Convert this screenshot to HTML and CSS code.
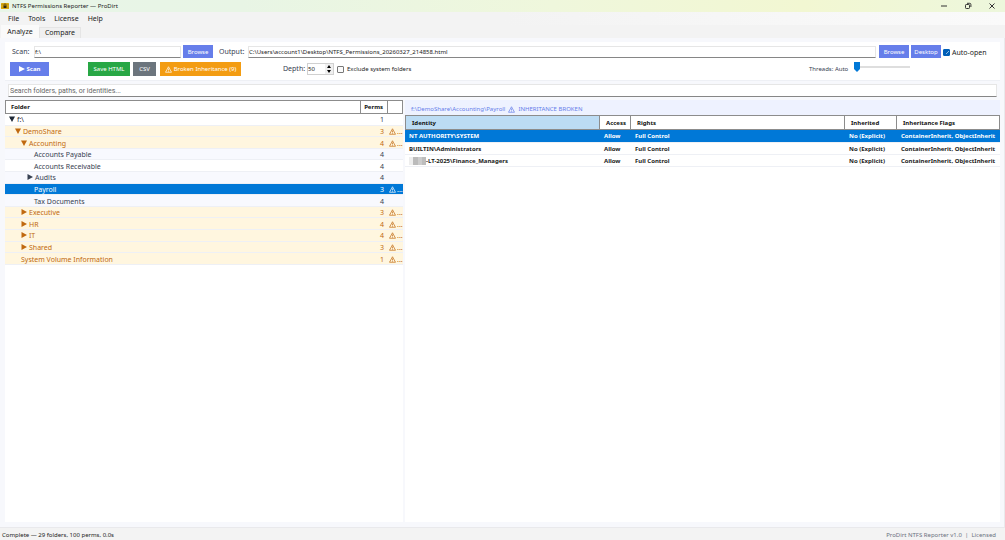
FILE: index.html
```html
<!DOCTYPE html>
<html lang="en">
<head>
<meta charset="utf-8">
<title>NTFS Permissions Reporter — ProDirt</title>
<link rel="stylesheet" href="styles.css">
</head>
<body>
<svg class="defs" aria-hidden="true">
  <symbol id="warn" viewBox="0 0 14 14"><path d="M7 1.5 13 12.5H1Z" fill="none" stroke="currentColor" stroke-width="1.4" stroke-linejoin="round"/><path d="M7 5v4M7 10v1.3" stroke="currentColor" stroke-width="1.4"/></symbol>
  <symbol id="down" viewBox="0 0 6 6"><path d="M0 .5H6L3 6Z" fill="currentColor"/></symbol>
  <symbol id="right" viewBox="0 0 6 6"><path d="M.5 0V6L6 3Z" fill="currentColor"/></symbol>
</svg>
<header class="titlebar">
  <svg class="app-icon" viewBox="0 0 16 12"><rect width="16" height="12" rx="1" fill="#d9a90c"/><path d="M6 5V3.5a2 2 0 0 1 4 0V5" fill="none" stroke="#2c2714" stroke-width="1.2"/><rect x="5" y="5" width="6" height="5" fill="#2c2714"/><path d="M1 3h2M1 9h2M13 3h2M13 9h2" stroke="#8a7420"/></svg>
  <h1 class="title">NTFS Permissions Reporter — ProDirt</h1>
  <div class="window-controls">
    <button class="win-btn" aria-label="Minimize"><svg viewBox="0 0 8 8"><path d="M1 4h6"/></svg></button>
    <button class="win-btn" aria-label="Restore"><svg viewBox="0 0 8 8"><rect x="1.5" y="2.5" width="4" height="4" rx=".8"/><path d="M3 1.3h2.7q1.2 0 1.2 1.2V5"/></svg></button>
    <button class="win-btn" aria-label="Close"><svg viewBox="0 0 8 8"><path d="m1.5 1.5 5 5m0-5-5 5"/></svg></button>
  </div>
</header>
<nav class="menubar">
  <button class="menu">File</button><button class="menu">Tools</button><button class="menu">License</button><button class="menu">Help</button>
</nav>
<div class="tabs" role="tablist">
  <button class="tab active" role="tab" aria-selected="true">Analyze</button><button class="tab" role="tab" aria-selected="false">Compare</button>
</div>
<main class="page">
  <section class="toolbar">
    <div class="row paths">
      <label class="scan-label" for="scan">Scan:</label>
      <input class="field scan-field" id="scan" value="f:\">
      <button class="btn blue">Browse</button>
      <label class="out-label" for="out">Output:</label>
      <input class="field out-field" id="out" value="C:\Users\account1\Desktop\NTFS_Permissions_20260327_214858.html">
      <button class="btn blue">Browse</button>
      <button class="btn blue desktop">Desktop</button>
      <label class="check"><input type="checkbox" checked>Auto-open</label>
    </div>
    <div class="row actions">
      <button class="btn blue scan-btn"><svg class="play" viewBox="0 0 6 6"><path d="M0 0 6 3 0 6Z" fill="currentColor"/></svg>Scan</button>
      <button class="btn green">Save HTML</button>
      <button class="btn gray">CSV</button>
      <button class="btn orange"><svg class="warn"><use href="#warn"/></svg>Broken Inheritance (9)</button>
      <label class="depth-label" for="depth">Depth:</label>
      <div class="spinner">
        <input id="depth" value="50">
        <div class="steps"><button class="step" aria-label="Increase"><svg viewBox="0 0 4 3"><path d="M0 3 2 0 4 3Z"/></svg></button><button class="step" aria-label="Decrease"><svg viewBox="0 0 4 3"><path d="M0 0 2 3 4 0Z"/></svg></button></div>
      </div>
      <label class="check exclude"><input type="checkbox">Exclude system folders</label>
      <label class="threads-label" for="threads">Threads: Auto</label>
      <input class="slider" id="threads" type="range" min="0" max="32" value="0">
    </div>
  </section>
  <input class="field search" type="search" aria-label="Search" placeholder="Search folders, paths, or identities...">
  <div class="split">
    <section class="tree-pane">
      <table class="tree">
        <colgroup><col><col class="c-perms"><col class="c-warn"></colgroup>
        <thead><tr><th>Folder</th><th class="num">Perms</th><th></th></tr></thead>
        <tbody>
          <tr class="l0"><td><svg class="arrow"><use href="#down"/></svg>f:\</td><td>1</td><td></td></tr>
          <tr class="l1 broken"><td><svg class="arrow"><use href="#down"/></svg>DemoShare</td><td>3</td><td><svg class="warn"><use href="#warn"/></svg>...</td></tr>
          <tr class="l2 broken"><td><svg class="arrow"><use href="#down"/></svg>Accounting</td><td>4</td><td><svg class="warn"><use href="#warn"/></svg>...</td></tr>
          <tr class="leaf alt"><td>Accounts Payable</td><td>4</td><td></td></tr>
          <tr class="leaf"><td>Accounts Receivable</td><td>4</td><td></td></tr>
          <tr class="l3 alt"><td><svg class="arrow"><use href="#right"/></svg>Audits</td><td>4</td><td></td></tr>
          <tr class="leaf selected"><td>Payroll</td><td>3</td><td><svg class="warn"><use href="#warn"/></svg>...</td></tr>
          <tr class="leaf alt"><td>Tax Documents</td><td>4</td><td></td></tr>
          <tr class="l2 broken"><td><svg class="arrow"><use href="#right"/></svg>Executive</td><td>3</td><td><svg class="warn"><use href="#warn"/></svg>...</td></tr>
          <tr class="l2 broken"><td><svg class="arrow"><use href="#right"/></svg>HR</td><td>4</td><td><svg class="warn"><use href="#warn"/></svg>...</td></tr>
          <tr class="l2 broken"><td><svg class="arrow"><use href="#right"/></svg>IT</td><td>4</td><td><svg class="warn"><use href="#warn"/></svg>...</td></tr>
          <tr class="l2 broken"><td><svg class="arrow"><use href="#right"/></svg>Shared</td><td>3</td><td><svg class="warn"><use href="#warn"/></svg>...</td></tr>
          <tr class="l2 broken"><td>System Volume Information</td><td>1</td><td><svg class="warn"><use href="#warn"/></svg>...</td></tr>
        </tbody>
      </table>
    </section>
    <section class="detail-pane">
      <div class="crumb">f:\DemoShare\Accounting\Payroll<svg class="warn"><use href="#warn"/></svg>INHERITANCE BROKEN</div>
      <table class="perms">
        <colgroup><col class="c-identity"><col class="c-access"><col><col class="c-inherited"><col class="c-flags"></colgroup>
        <thead><tr><th class="sorted">Identity</th><th>Access</th><th>Rights</th><th>Inherited</th><th>Inheritance Flags</th></tr></thead>
        <tbody>
          <tr class="selected"><td>NT AUTHORITY\SYSTEM</td><td>Allow</td><td>Full Control</td><td>No (Explicit)</td><td>ContainerInherit, ObjectInherit</td></tr>
          <tr><td>BUILTIN\Administrators</td><td>Allow</td><td>Full Control</td><td>No (Explicit)</td><td>ContainerInherit, ObjectInherit</td></tr>
          <tr><td><span class="redacted"></span>-LT-2025\Finance_Managers</td><td>Allow</td><td>Full Control</td><td>No (Explicit)</td><td>ContainerInherit, ObjectInherit</td></tr>
        </tbody>
      </table>
    </section>
  </div>
</main>
<footer class="statusbar"><span>Complete — 29 folders, 100 perms, 0.0s</span><span class="version">ProDirt NTFS Reporter v1.0&nbsp; |&nbsp; Licensed</span></footer>
</body>
</html>
```
FILE: styles.css
```css
* { box-sizing: border-box; }
body {
  margin: 0;
  min-height: 100vh;
  display: flex;
  flex-direction: column;
  background: #f3f3f3;
  color: #1b1b1b;
  font: 7px/10px "Noto Sans", "Open Sans", sans-serif;
}
button, input { font: inherit; color: inherit; margin: 0; padding: 0; border: 0; background: none; }
.defs { position: absolute; width: 0; height: 0; }

.titlebar {
  display: flex;
  align-items: center;
  height: 12px;
  padding-left: 1px;
  background: linear-gradient(90deg, #e8f5e8 0%, #e8f5e5 24%, #eff7dc 55%, #f2f7d2 80%, #edf7dc 100%);
}
.app-icon { width: 8px; height: 6px; margin-right: 3px; }
.title { margin: 0; font-size: 6px; font-weight: 400; }
.window-controls { display: flex; gap: 16px; margin-left: auto; margin-right: 9px; }
.win-btn { display: flex; width: 8px; height: 8px; }
.win-btn svg { width: 8px; height: 8px; fill: none; stroke: #333; stroke-width: 1; }

.menubar { display: flex; gap: 9px; height: 13px; padding: 0 8px; background: linear-gradient(90deg, #f3f3f3, #f3f3f3 50%, #fafafa); }
.menu { line-height: 13px; }

.tabs { display: flex; align-items: flex-end; height: 13px; padding-left: 1px; }
.tab { width: 42px; height: 11px; border: 1px solid #e5e5e5; border-bottom: 0; background: #f0f0f0; line-height: 10px; }
.tab.active { width: 38px; height: 13px; background: #fafafa; border-color: #fafafa; }

.page { flex: 1; display: flex; flex-direction: column; padding: 4px 4px 5px 5px; background: #f7f8fc; border: 1px solid #e9e9ec; border-width: 0 1px 1px 0; }
.toolbar { display: flex; flex-direction: column; gap: 4px; height: 39px; padding: 3px 5px; background: #fff; border-bottom: 1px solid #eef0f5; }
.row { display: flex; align-items: center; }
.paths { height: 13px; color: #374151; }
.scan-label { width: 24px; padding-left: 2px; }
.field { height: 12px; min-width: 0; border: 1px solid #e6e6e6; border-bottom-color: #868686; background: #fff; color: #1b1b1b; outline: 0; }
.scan-field { width: 147px; margin-right: 2px; font-size: 6px; }
.out-label { width: 29px; margin-left: 6px; }
.out-field { flex: 1; margin-right: 3px; font-size: 6px; }
.btn { display: flex; align-items: center; justify-content: center; gap: 2px; height: 14px; color: #fff; font-size: 6px; white-space: nowrap; }
.paths .btn { width: 30px; height: 13px; }
.blue { background: #667eea; }
.green { width: 42px; margin-left: 39px; background: #28a745; }
.gray { width: 23px; margin-left: 3px; background: #6c757d; }
.orange { width: 81px; margin-left: 4px; background: #f39c12; }
.paths .desktop { margin-left: 2px; }
.check { display: flex; align-items: center; gap: 3px; color: #1b1b1b; white-space: nowrap; }
.check input { appearance: none; width: 7px; height: 7px; border: 1px solid #777; border-radius: 1px; background: #fafafa; }
.check input:checked { border-color: #005fb8; background: #005fb8 linear-gradient(135deg, transparent 45%, #8ebbe2 45% 60%, transparent 60%) center / 4px 3px no-repeat; }
.paths .check { width: 52px; margin-left: 2px; padding-top: 2px; gap: 2px; }
.actions { height: 14px; }
.scan-btn { width: 39px; gap: 2px; font-weight: 700; }
.play { width: 6px; height: 6px; }
.warn { flex: none; width: 7px; height: 7px; }
.depth-label { width: 24px; margin-left: 42px; color: #374151; }
.spinner { display: flex; width: 27px; height: 12px; border: 1px solid #d0d0d0; background: #fff; }
.spinner input { width: 17px; font-size: 6px; }
.steps { display: grid; width: 8px; background: #f0f0f0; }
.step { display: flex; align-items: center; justify-content: center; }
.step svg { width: 4px; height: 3px; }
.exclude { margin-left: 3px; font-size: 6px; }
.threads-label { width: 45px; margin-left: auto; color: #374151; font-size: 6px; }
.slider { appearance: none; width: 56px; height: 11px; margin-right: 85px; margin-bottom: 4px; background: linear-gradient(#dedede, #dedede) center / 100% 2px no-repeat; }
.slider::-webkit-slider-thumb { appearance: none; width: 6px; height: 10px; background: #0078d7; clip-path: polygon(0 0, 100% 0, 100% 70%, 50% 100%, 0 70%); }
.search { appearance: none; height: 13px; margin: 3px; padding-left: 1px; font-family: Roboto, sans-serif; }
.search::placeholder { color: #666; opacity: 1; }

.split { flex: 1; display: grid; grid-template-columns: 398fr 595fr; gap: 2px; }
.tree-pane, .detail-pane { background: #fff; min-width: 0; }
table { width: 100%; border-collapse: separate; border-spacing: 0; table-layout: fixed; }
th, td { padding: 0; text-align: left; white-space: nowrap; overflow: hidden; line-height: 10px; }
th { border: 1px solid #8c8c8c; border-left: 0; background: #fff; color: #111; font-size: 6px; }
th:first-child { border-left: 1px solid #8c8c8c; }

.tree { height: 165px; color: #374151; }
.tree th { height: 14px; padding-left: 5px; }
.tree td { padding-top: 1px; border-bottom: 1px solid #eef0f5; line-height: 9px; }
.c-perms { width: 27px; }
.c-warn { width: 15px; }
.tree .num { padding: 0 4px 0 0; text-align: right; }
.tree td:nth-child(2) { padding-right: 4px; text-align: right; }
.tree .warn { margin-left: 1px; margin-right: 1px; vertical-align: -1px; }
.arrow { width: 6px; height: 6px; margin-right: 2px; }
.tree .l0 td:first-child { padding-left: 4px; color: #1f2937; }
.tree .l1 td:first-child { padding-left: 10px; }
.tree .l2 td:first-child { padding-left: 16px; }
.tree .l3 td:first-child { padding-left: 22px; }
.tree .leaf td:first-child { padding-left: 29px; }
.alt { background: #f8f9fe; }
.broken { background: #fff6df; color: #c0690f; }
.tree .selected { color: #fff; }
.selected { background: #0078d7; color: #fff; }

.crumb { display: flex; align-items: center; gap: 3px; height: 15px; padding: 3px 6px 0; background: #eef2ff; color: #667eea; font-size: 6px; }
.perms th { height: 15px; padding-left: 6px; }
.perms .sorted { background: #bcdcf4; }
.perms td { height: 12px; padding-left: 4px; border-bottom: 1px solid #eef0f5; font-size: 6px; font-weight: 700; }
.perms .selected td { height: 13px; }
.c-identity { width: 195px; }
.c-access { width: 31px; }
.c-inherited { width: 52px; }
.c-flags { width: 103px; }
.redacted { display: inline-block; width: 17px; height: 8px; vertical-align: middle; background: linear-gradient(90deg, #eee 25%, #bbb 25% 50%, #ccc 50% 75%, #bdbdbd 75%); }

.statusbar { display: flex; justify-content: space-between; align-items: center; height: 12px; padding: 1px 9px 0 2px; font-size: 6px; }
.version { color: #6b7280; }
```
